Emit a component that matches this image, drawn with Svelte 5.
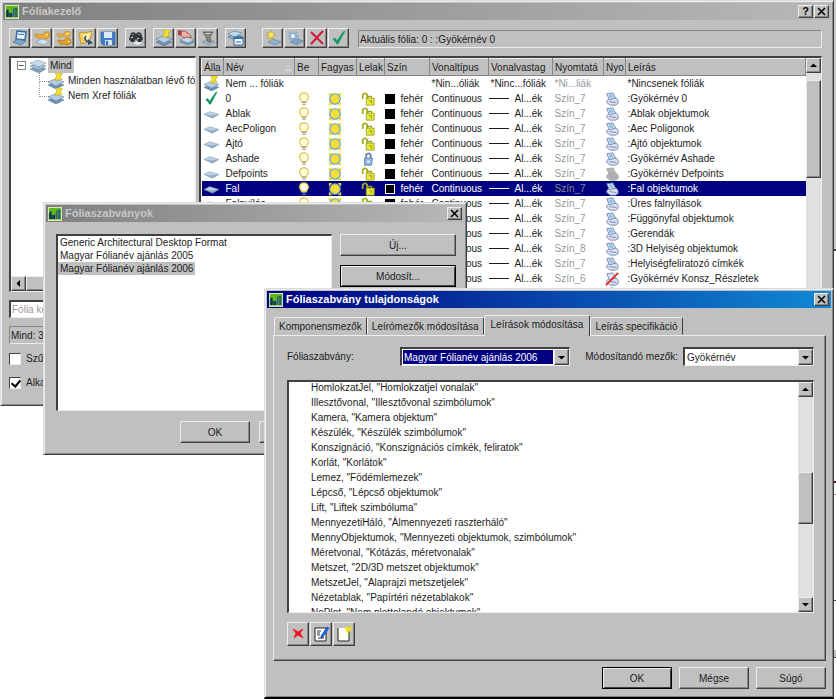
<script>
    let filterText = "";
    let invert = false;
    let apply = true;
    let activeTab = 2;
    let standard = "Magyar Fólianév ajánlás 2006";
    let field = "Gyökérnév";
    let selectedLayer = "Fal";

    const toolGroups = [
        ["filter", "key", "keys", "folder", "save"],
        ["find"],
        ["used", "hand", "funnel"],
        ["override"],
        ["create", "frozen", "delete", "current"],
    ];

    const toolNames = {
        filter: "Új szűrő",
        key: "Kulcs",
        keys: "Kulcsok",
        folder: "Betöltés",
        save: "Mentés",
        find: "Keresés",
        used: "Használt fóliák",
        hand: "Kijelölés",
        funnel: "Szűrés",
        override: "Felülbírálás",
        create: "Új fólia",
        frozen: "Új fagyasztott fólia",
        delete: "Törlés",
        current: "Aktuális",
    };

    const columns = [
        { title: "Álla", width: 22 },
        { title: "Név", width: 71, sorted: true },
        { title: "Be", width: 24 },
        { title: "Fagyas", width: 38 },
        { title: "Lelak", width: 28 },
        { title: "Szín", width: 45 },
        { title: "Vonaltípus", width: 59 },
        { title: "Vonalvastag", width: 64 },
        { title: "Nyomtatá", width: 51 },
        { title: "Nyo", width: 22 },
        { title: "Leírás" },
    ];

    const layers = [
        { name: "0", style: "Szín_7", desc: ":Gyökérnév 0", current: true },
        { name: "Ablak", style: "Szín_7", desc: ":Ablak objektumok" },
        { name: "AecPoligon", style: "Szín_7", desc: ":Aec Poligonok" },
        { name: "Ajtó", style: "Szín_7", desc: ":Ajtó objektumok" },
        { name: "Ashade", style: "Szín_7", desc: ":Gyökérnév Ashade", locked: true },
        { name: "Defpoints", style: "Szín_7", desc: ":Gyökérnév Defpoints", plot: "plotgray" },
        { name: "Fal", style: "Szín_7", desc: ":Fal objektumok" },
        { name: "Falnyílás", style: "Szín_7", desc: ":Üres falnyílások" },
        { name: "Függönyfal", style: "Szín_7", desc: ":Függönyfal objektumok" },
        { name: "Gerenda", style: "Szín_7", desc: ":Gerendák" },
        { name: "Helyiség", style: "Szín_8", desc: ":3D Helyiség objektumok" },
        { name: "HelyFelirat", style: "Szín_7", desc: ":Helyiségfeliratozó címkék" },
        { name: "Konsz_Rész", style: "Szín_6", desc: ":Gyökérnév Konsz_Részletek", plot: "noplot" },
        { name: "Konszign", style: "Szín_7", desc: ":Konszignációs címkék, feliratok" },
    ];

    const standards = [
        "Generic Architectural Desktop Format",
        "Magyar Fólianév ajánlás 2005",
        "Magyar Fólianév ajánlás 2006",
    ];

    const tabs = [
        "Komponensmezők",
        "Leírómezők módosítása",
        "Leírások módosítása",
        "Leírás specifikáció",
    ];

    const descriptions = [
        ["HomlokzatJel", "Homlokzatjel vonalak"],
        ["Illesztővonal", "Illesztővonal szimbólumok"],
        ["Kamera", "Kamera objektum"],
        ["Készülék", "Készülék szimbólumok"],
        ["Konszignáció", "Konszignációs címkék, feliratok"],
        ["Korlát", "Korlátok"],
        ["Lemez", "Födémlemezek"],
        ["Lépcső", "Lépcső objektumok"],
        ["Lift", "Liftek szimbóluma"],
        ["MennyezetiHáló", "Álmennyezeti raszterháló"],
        ["MennyObjektumok", "Mennyezeti objektumok, szimbólumok"],
        ["Méretvonal", "Kótázás, méretvonalak"],
        ["Metszet", "2D/3D metszet objektumok"],
        ["MetszetJel", "Alaprajzi metszetjelek"],
        ["Nézetablak", "Papírtéri nézetablakok"],
        ["NoPlot", "Nem plottolandó objektumok"],
    ];
</script>

{#snippet icon(name)}
    <svg class="icon" viewBox="0 0 16 16" aria-hidden="true">
        {#if name === "app"}
            <rect width="16" height="16" fill="#e4f0c8" />
            <rect x="1" y="1" width="14" height="14" fill="#5fb91c" />
            <path d="M1 7h3v2h3v5H1z" fill="#1f5c3a" />
            <path d="M2 5h2v9H2zM6 9h2v5H6z" fill="#17324f" />
            <path d="M9 4h1v10H9zM11 3h3v11h-3z" fill="#244c5a" />
            <path d="M8 8h1v5H8zM12 4h1v9h-1z" fill="#3a7fc4" />
            <path d="M1 14h14v1H1z" fill="#c7d58a" />
        {:else if name === "sheets"}
            <path d="M0 11l8-3 8 3-7 4z" fill="#7f9fbd" stroke="#5f80a2" stroke-width=".5" />
            <path d="M0 8l8-3 8 3-7 4z" fill="#a5c0d8" stroke="#5f80a2" stroke-width=".5" />
            <path d="M0 5l8-3 8 3-7 4z" fill="#c9dcec" stroke="#6f90b0" stroke-width=".5" />
        {:else if name === "sheet"}
            <path d="M0 9l6-3 10 3-7 4z" fill="#8fabc8" stroke="#7894b0" stroke-width=".5" />
            <path d="M1 9l5-3 9 3-7 1z" fill="#bcd0e3" />
        {:else if name === "filter"}
            <path d="M5 1l9 1-1 8-9-1z" fill="#e9f2fa" stroke="#2d6cab" stroke-width="1.5" />
            <path d="M6 4l6 .6" stroke="#2d6cab" />
            <path d="M1 12l5-3 8 2-5 4z" fill="#7fa4c6" stroke="#3c6690" stroke-width=".6" />
        {:else if name === "key"}
            <path d="M2 12l6-3 7 2-5 4z" fill="#d3e0ec" stroke="#6b8aa8" stroke-width=".5" />
            <path d="M1 4l8 1 2-3h4v5l-3 2-3-1H6l-1 1-1-2-3-1z" fill="#eeb23c" stroke="#c98510" stroke-width=".8" />
            <path d="M12 4h2v1h-2z" fill="#fff3c0" />
        {:else if name === "keys"}
            <path d="M1 4h7l2-3 4 1v4l-3 1-3-1H5L4 8 3 6 1 5z" fill="#f0ba48" stroke="#c98510" stroke-width=".7" />
            <path d="M2 10l6 1 2-3 4 1 1 4-3 2-4-1H6l-1 1-1-2-2-1z" fill="#e8a126" stroke="#b87408" stroke-width=".7" />
            <path d="M11 3h2v1h-2zM12 11h2v1h-2z" fill="#fff3c0" />
        {:else if name === "folder"}
            <path d="M1 3l4-1 1 1 8-2-2 10-9 3z" fill="#f0cf5c" stroke="#b8901c" stroke-width=".8" />
            <path d="M4 5l9-2-4 9z" fill="#fff0ae" />
            <path d="M8 6c-2 2-1 5 3 6" fill="none" stroke="#2c4f7c" stroke-width="1.6" />
            <path d="M10 9l5 4-5 2z" fill="#2c4f7c" />
        {:else if name === "save"}
            <path d="M1 2h14v13H3l-2-2z" fill="#3f7fc8" stroke="#24589c" stroke-width=".6" />
            <path d="M4 2h8v6H4z" fill="#dce9f6" />
            <path d="M5 10h7v5H5z" fill="#d4e0ee" />
            <path d="M6 11h2v4H6z" fill="#2f6fbd" />
        {:else if name === "find"}
            <path d="M4 13l6-3 6 2-6 4z" fill="#e2e8ee" stroke="#8795a5" stroke-width=".5" />
            <path d="M3 3l3-1 2 2 2-2 3 1 2 6-2 3h-3l-2-3-2 3H3L1 9z" fill="#32363c" />
            <path d="M3 8l2-1M9 9l2-1M5 4v1M11 4v1" stroke="#c9d3df" stroke-width="1.2" />
        {:else if name === "used"}
            <path d="M0 12l7-3 9 3-8 4z" fill="#6f93b5" stroke="#4d6f92" stroke-width=".5" />
            <path d="M0 9l7-3 9 3-8 4z" fill="#b4cde2" stroke="#4d6f92" stroke-width=".5" />
            <path d="M7 0h7v2l-2 1 2 4-3-1-3 2-1-2 2-3z" fill="#f5e228" stroke="#b8a414" stroke-width=".6" />
        {:else if name === "hand"}
            <path d="M2 12l7-4 7 4-6 3z" fill="#7d9dbd" stroke="#4d6f92" stroke-width=".5" />
            <path d="M2 10l7-4 7 4-6 3z" fill="#c4d8e8" stroke="#4d6f92" stroke-width=".5" />
            <path d="M3 1h4l6 5v2l-4-1-3 1-2-2-2-1z" fill="#eeb0a2" stroke="#9b3a35" stroke-width=".8" />
            <path d="M0 0l4 1-1 5-3-1z" fill="#b3383f" />
        {:else if name === "funnel"}
            <path d="M2 12l7-3 6 3-6 3z" fill="#9db9d2" stroke="#58789a" stroke-width=".5" />
            <path d="M3 2h10l-3 5 1 5H8L6 7z" fill="#8a867d" stroke="#55524c" stroke-width=".7" />
            <path d="M5 3h6l-1 1H6z" fill="#d7d2c5" />
        {:else if name === "override"}
            <path d="M0 7l6-3 7 2-6 4z" fill="#8aaac8" stroke="#4b6e91" stroke-width=".5" />
            <path d="M0 4l6-3 8 2-7 4z" fill="#c4d8ea" stroke="#4b6e91" stroke-width=".5" />
            <path d="M6 7h9v8H6z" fill="#f3f7fb" stroke="#2f5f99" />
            <path d="M6 7h9v2H6z" fill="#2f6fbd" />
            <path d="M8 11h5v2H8z" fill="#92b1d1" />
        {:else if name === "create"}
            <path d="M3 12l5-3 8 3-6 3z" fill="#8fb0d0" stroke="#5d7ea2" stroke-width=".6" />
            <path d="M6 0v11M1 5h10M2 2l7 7M9 2L2 9" stroke="#c8a51b" />
            <circle cx="6" cy="5" r="2.4" fill="#ffe94a" />
        {:else if name === "frozen"}
            <path d="M3 12l6-4 7 3-6 4z" fill="#7fa2c6" stroke="#5d7ea2" stroke-width=".6" />
            <path d="M6 1v11M1 6h11M2 2l8 8M10 2L2 10" stroke="#7ea8cf" stroke-width="1.4" />
            <circle cx="6" cy="6" r="2" fill="#e9f5ff" />
        {:else if name === "delete"}
            <path d="M2 2l12 12M14 1L2 14" stroke="#d01c3c" stroke-width="2" fill="none" />
        {:else if name === "current"}
            <path d="M2 9l2-1 2 3 6-9 2-1-7 13H6z" fill="#0b9a62" stroke="#0b9a62" stroke-width=".6" />
        {:else if name === "bulb"}
            <path d="M8 1c-3 0-5 2-5 5 0 2 2 3 2 5h6c0-2 2-3 2-5 0-3-2-5-5-5z" fill="#fffde0" stroke="#e0c548" stroke-width="1.3" />
            <path d="M6 12h4M6 14h4" stroke="#8d97a5" stroke-width="1.4" />
        {:else if name === "sun"}
            <path d="M1 1h4L1 5zM15 1h-4l4 4zM1 15v-4l4 4zM15 15h-4l4-4z" fill="#f0dc28" />
            <circle cx="8" cy="8" r="6" fill="#f6dd3a" stroke="#5fa4bc" stroke-width="1.4" />
        {:else if name === "unlock"}
            <path d="M2 8V3q3-3 5 0v5" fill="none" stroke="#a4ac20" stroke-width="2" />
            <path d="M6 7h9v8H6z" fill="#ebe83c" stroke="#9ca21c" />
            <path d="M8 7V5h4v2M9 10h3v3" fill="none" stroke="#9ca21c" stroke-width="1.3" />
        {:else if name === "lock"}
            <path d="M6 7V3q3-3 5 0v4" fill="none" stroke="#5a7dab" stroke-width="2" />
            <path d="M4 7h9l-1 8H4z" fill="#9cb9dc" stroke="#5a7dab" />
            <path d="M7 10h3v2H7z" fill="#e7f0fa" />
        {:else if name === "plot" || name === "plotgray" || name === "noplot"}
            <g fill={name === "plotgray" ? "#b5b5b5" : "#dbe2f3"} stroke={name === "plotgray" ? "#a4a4a4" : "#747fa9"}>
                <path d="M2 10l3-3h8l2 3v3l-3 2H6l-4-3z" />
                <path d="M2 2l7-1 3 6-7 2z" />
                <path d="M5 11l8 1" />
            </g>
            {#if name === "plot"}
                <path d="M4 3l4-.5L10 6 6 7z" fill="#85c5e8" />
            {:else if name === "noplot"}
                <path d="M1 15L15 1" stroke="#e02a1e" stroke-width="2" />
            {/if}
        {:else if name === "erase"}
            <path d="M3 3l2 1 3 2 5-3-3 4 3 5-5-3-4 3 2-5z" fill="#f0141e" stroke="#f0141e" stroke-width=".8" />
        {:else if name === "edit"}
            <path d="M2 2h11v13H2z" fill="#fff" stroke="#222" />
            <path d="M4 5h4M4 7h3M4 9h3M5 12h6" stroke="#333" />
            <path d="M14 1l2 1-6 9-2 1v-2z" fill="#1f6fe0" stroke="#0c2f9a" stroke-width=".6" />
        {:else if name === "new"}
            <path d="M2 2h11v13H2z" fill="#fffff4" />
            <path d="M2 2v13h11V5" fill="none" stroke="#222" />
            <path d="M12 0v7M9 3h7M10 1l5 5M15 1l-5 5" stroke="#f2e01c" stroke-width="1.3" />
        {/if}
    </svg>
{/snippet}

{#snippet closeIcon()}
    <svg class="glyph" viewBox="0 0 9 9" aria-hidden="true">
        <path d="M1 1l7 7M8 1L1 8" stroke="#000" stroke-width="1.6" />
    </svg>
{/snippet}

{#snippet arrow(dir)}
    <svg class="glyph" viewBox="0 0 9 9" aria-hidden="true">
        {#if dir === "up"}
            <path d="M1 6h7L4.500 2.500z" />
        {:else if dir === "down"}
            <path d="M1 3h7L4.500 6.500z" />
        {:else}
            <path d="M6 1v7L2.500 4.500z" />
        {/if}
    </svg>
{/snippet}

<main class="desktop">
    <div class="drawing"></div>

    <section class="window manager">
        <header class="titlebar">
            {@render icon("app")}
            <h1>Fóliakezelő</h1>
            <button class="caption" aria-label="Súgó">?</button>
            <button class="caption" aria-label="Bezárás">{@render closeIcon()}</button>
        </header>

        <div class="toolbar">
            {#each toolGroups as group}
                <div class="group">
                    {#each group as tool}
                        <button class="tool" aria-label={toolNames[tool]}>{@render icon(tool)}</button>
                    {/each}
                </div>
            {/each}
            <output class="status">Aktuális fólia: 0 : :Gyökérnév 0</output>
        </div>

        <div class="panes">
            <aside>
                <div class="tree">
                    <ul>
                        <li>
                            <button class="expander" aria-label="Összecsukás">−</button>
                            {@render icon("sheets")}
                            <span class="chosen">Mind</span>
                        </li>
                        <li class="child">{@render icon("used")}<span>Minden használatban lévő fóliák</span></li>
                        <li class="child">{@render icon("used")}<span>Nem Xref fóliák</span></li>
                    </ul>
                    <div class="hscroll">
                        <button class="scroll" aria-label="Balra">{@render arrow("left")}</button>
                        <div class="thumb"></div>
                    </div>
                </div>
                <input class="search" type="text" placeholder="Fólia keresése" aria-label="Fólia keresése" bind:value={filterText} />
                <output class="status count">Mind: 35 fólia</output>
                <label><input type="checkbox" bind:checked={invert} />Szűrő invertálása</label>
                <label><input type="checkbox" bind:checked={apply} />Alkalmazás az eszköztárra</label>
            </aside>

            <div class="layers">
                <div class="rows">
                    <table>
                        <colgroup>
                            {#each columns as column}
                                <col style={column.width ? `width:${column.width}px` : ""} />
                            {/each}
                        </colgroup>
                        <thead>
                            <tr>
                                {#each columns as column}
                                    <th class:sorted={column.sorted}>{column.title}</th>
                                {/each}
                            </tr>
                        </thead>
                        <tbody>
                            <tr>
                                <td>{@render icon("used")}</td>
                                <td>Nem ... fóliák</td>
                                <td></td>
                                <td></td>
                                <td></td>
                                <td></td>
                                <td>*Nin...óliák</td>
                                <td>*Ninc...fóliák</td>
                                <td class="muted">*Ni...liák</td>
                                <td></td>
                                <td>*Nincsenek fóliák</td>
                            </tr>
                            {#each layers as layer}
                                <tr class:selected={layer.name === selectedLayer} on:click={() => (selectedLayer = layer.name)}>
                                    <td>{@render icon(layer.current ? "current" : "sheet")}</td>
                                    <td>{layer.name}</td>
                                    <td class="center">{@render icon("bulb")}</td>
                                    <td class="center">{@render icon("sun")}</td>
                                    <td class="center">{@render icon(layer.locked ? "lock" : "unlock")}</td>
                                    <td class="tight"><span class="cell"><i class="swatch"></i>fehér</span></td>
                                    <td>Continuous</td>
                                    <td class="tight"><span class="cell"><i class="line"></i>Al...ék</span></td>
                                    <td class="muted">{layer.style}</td>
                                    <td class="center">{@render icon(layer.plot || "plot")}</td>
                                    <td>{layer.desc}</td>
                                </tr>
                            {/each}
                        </tbody>
                    </table>
                </div>
                <div class="vscroll">
                    <button class="scroll" aria-label="Fel">{@render arrow("up")}</button>
                    <div class="thumb"></div>
                </div>
            </div>
        </div>
    </section>

    <section class="window standards">
        <header class="titlebar">
            {@render icon("app")}
            <h1>Fóliaszabványok</h1>
            <button class="caption" aria-label="Bezárás">{@render closeIcon()}</button>
        </header>
        <div class="choose">
            <ul class="listbox" role="listbox" aria-label="Fóliaszabványok">
                {#each standards as item}
                    <li role="option" aria-selected={item === standard}>
                        <span class:chosen={item === standard}>{item}</span>
                    </li>
                {/each}
            </ul>
            <div class="side">
                <button class="push">Új...</button>
                <button class="push default">Módosít...</button>
            </div>
        </div>
        <footer>
            <button class="push">OK</button>
            <button class="push">Mégse</button>
            <button class="push">Súgó</button>
        </footer>
    </section>

    <section class="window properties">
        <header class="titlebar active">
            {@render icon("app")}
            <h1>Fóliaszabvány tulajdonságok</h1>
            <button class="caption" aria-label="Bezárás">{@render closeIcon()}</button>
        </header>
        <div class="tabs" role="tablist">
            {#each tabs as tab, i}
                <button role="tab" aria-selected={i === activeTab} class:active={i === activeTab} on:click={() => (activeTab = i)}>{tab}</button>
            {/each}
        </div>
        <div class="page">
            <div class="fields">
                <label for="standard">Fóliaszabvány:</label>
                <div class="combo focused">
                    <select id="standard" bind:value={standard}>
                        {#each standards as item}
                            <option>{item}</option>
                        {/each}
                    </select>
                    <span class="drop">{@render arrow("down")}</span>
                </div>
                <label class="second" for="field">Módosítandó mezők:</label>
                <div class="combo small">
                    <select id="field" bind:value={field}>
                        <option>Gyökérnév</option>
                    </select>
                    <span class="drop">{@render arrow("down")}</span>
                </div>
            </div>
            <div class="descriptions">
                <ul>
                    {#each descriptions as [key, text]}
                        <li>{key}, "{text}"</li>
                    {/each}
                </ul>
                <div class="vscroll">
                    <button class="scroll" aria-label="Fel">{@render arrow("up")}</button>
                    <div class="thumb"></div>
                    <button class="scroll" aria-label="Le">{@render arrow("down")}</button>
                </div>
            </div>
            <div class="actions">
                <button class="tool" aria-label="Törlés">{@render icon("erase")}</button>
                <button class="tool" aria-label="Szerkesztés">{@render icon("edit")}</button>
                <button class="tool" aria-label="Új">{@render icon("new")}</button>
            </div>
        </div>
        <footer>
            <button class="push default">OK</button>
            <button class="push">Mégse</button>
            <button class="push">Súgó</button>
        </footer>
    </section>
</main>

<style>
    :global(body) {
        background: #fff;
    }
    .desktop {
        --face: #c0c0c0;
        --light: #ececec;
        --dark: #404040;
        --shade: #868686;
        --navy: #000080;
        position: relative;
        min-height: 100vh;
        overflow: hidden;
        font: 10px/15px "Liberation Sans", Arial, sans-serif;
        color: #1c1c1c;
    }
    .desktop * {
        box-sizing: border-box;
    }
    ul {
        list-style: none;
        margin: 0;
        padding: 0;
    }
    button,
    input,
    select {
        font: inherit;
        color: inherit;
        margin: 0;
        padding: 0;
        border-radius: 0;
    }
    .drawing {
        position: absolute;
        inset: 0 0 0 auto;
        width: 3px;
        background: linear-gradient(
            #ccc 0 249px,
            #444 249px 251px,
            #fff 251px 481px,
            #800010 481px 483px,
            #fff 483px 494px,
            #c88 494px 495px,
            #fff 495px 600px,
            #444 600px 601px,
            #fff 601px 650px,
            #c0c0c0 650px 657px,
            #444 657px 658px,
            #fff 658px
        );
    }

    .window {
        position: absolute;
        display: flex;
        flex-direction: column;
        background: var(--face);
        border: 1px solid;
        border-color: #dcdcdc var(--dark) var(--dark) #dcdcdc;
        box-shadow: inset 1px 1px var(--light), inset -1px -1px var(--shade);
        padding: 2px;
    }
    .manager {
        top: 0;
        left: 0;
        right: 2px;
        height: 406px;
    }
    .standards {
        top: 202px;
        left: 43px;
        width: 424px;
    }
    .properties {
        top: 288px;
        left: 264px;
        right: 2px;
        border-bottom: 2px solid #000;
    }

    .titlebar {
        display: flex;
        align-items: center;
        height: 17px;
        padding: 0 2px;
        background: linear-gradient(90deg, #808080, #b8b8b8);
    }
    .titlebar.active {
        background: linear-gradient(90deg, #000080, #1088d4);
    }
    .titlebar .icon {
        width: 14px;
        height: 14px;
    }
    h1 {
        flex: 1;
        margin: 0 0 0 3px;
        font-size: 11px;
        color: #c8c8c8;
    }
    .active h1 {
        color: #fff;
    }

    .caption,
    .tool,
    .push,
    .scroll,
    .thumb,
    .drop {
        display: flex;
        align-items: center;
        justify-content: center;
        background: var(--face);
        border: 1px solid;
        border-color: var(--light) var(--dark) var(--dark) var(--light);
        box-shadow: inset -1px -1px var(--shade);
    }
    .caption {
        width: 15px;
        height: 13px;
        margin-left: 1px;
        font-size: 11px;
        font-weight: bold;
        line-height: 11px;
        color: #000;
    }
    .glyph {
        display: block;
        flex: none;
        width: 9px;
        height: 9px;
    }
    .icon {
        display: block;
        flex: none;
        width: 16px;
        height: 16px;
    }

    .toolbar {
        display: flex;
        gap: 7px;
        padding: 8px 9px 8px 6px;
    }
    .group {
        display: flex;
        gap: 1px;
    }
    .group:nth-child(5) {
        margin-left: 9px;
    }
    .tool {
        width: 21px;
        height: 20px;
    }
    .status {
        flex: 1;
        height: 18px;
        border: 1px solid;
        border-color: var(--shade) var(--light) var(--light) var(--shade);
        padding: 0 1px;
        line-height: 17px;
    }
    .toolbar .status {
        margin: 2px 0 0 2px;
    }

    .panes {
        flex: 1;
        min-height: 0;
        display: grid;
        grid-template-columns: 187px 1fr;
        gap: 3px;
        padding: 0 9px 8px 6px;
    }
    aside {
        display: flex;
        flex-direction: column;
    }
    .tree,
    .layers,
    .listbox,
    .descriptions,
    .combo,
    .search {
        background: #fff;
        border: 2px solid;
        border-width: 2px 1px 1px 2px;
        border-color: var(--dark) var(--light) var(--light) var(--dark);
    }
    .tree {
        display: flex;
        flex-direction: column;
        justify-content: space-between;
        height: 236px;
        overflow: hidden;
    }
    .tree li {
        display: flex;
        align-items: center;
        gap: 4px;
        height: 15px;
        padding-left: 6px;
        white-space: nowrap;
    }
    .tree .child {
        position: relative;
        padding-left: 37px;
    }
    .child::before {
        content: "";
        position: absolute;
        left: 28px;
        top: -7px;
        width: 9px;
        height: 15px;
        border: dotted #999;
        border-width: 0 0 1px 1px;
    }
    .expander {
        width: 9px;
        height: 9px;
        border: 1px solid var(--shade);
        background: #fff;
        line-height: 7px;
    }
    .chosen {
        background: var(--face);
        padding: 0 2px;
        margin: 0 -2px;
    }
    .hscroll {
        display: flex;
        height: 15px;
        background: #e0e0e0;
    }
    .hscroll .thumb {
        width: 120px;
    }
    .scroll {
        flex: none;
        width: 15px;
        height: 15px;
    }
    .search {
        height: 18px;
        margin: 8px 0;
        padding: 0 1px;
    }
    .search::placeholder {
        color: #999;
    }
    .count {
        flex: none;
        margin-bottom: 7px;
    }
    aside label {
        display: flex;
        align-items: center;
        gap: 5px;
        height: 15px;
        margin-bottom: 9px;
    }
    [type="checkbox"] {
        appearance: none;
        position: relative;
        width: 12px;
        height: 12px;
        background: #fff;
        border: 1px solid;
        border-color: var(--dark) var(--light) var(--light) var(--dark);
    }
    [type="checkbox"]:checked::after {
        content: "";
        position: absolute;
        left: 3px;
        top: 0;
        width: 4px;
        height: 7px;
        border: solid #000;
        border-width: 0 2px 2px 0;
        transform: rotate(40deg);
    }

    .layers {
        display: flex;
        min-height: 0;
        overflow: hidden;
    }
    .rows {
        flex: 1;
        overflow: hidden;
    }
    table {
        width: 100%;
        table-layout: fixed;
        border-collapse: collapse;
    }
    th,
    td {
        height: 15px;
        padding: 0 2px;
        text-align: left;
        white-space: nowrap;
        overflow: hidden;
    }
    th {
        position: relative;
        height: 17px;
        font-weight: normal;
        background: var(--face);
        border: 1px solid;
        border-color: var(--light) var(--shade) var(--shade) var(--light);
    }
    .sorted::after {
        content: "△";
        position: absolute;
        right: 3px;
        font-size: 8px;
        color: #eee;
    }
    td .icon {
        width: 15px;
        height: 15px;
    }
    td.center {
        padding: 0 6px 0 0;
    }
    .center .icon {
        width: 14px;
        height: 14px;
        margin: 0 auto;
    }
    td.tight {
        padding: 0;
    }
    .cell {
        display: flex;
        align-items: center;
        gap: 6px;
    }
    .swatch {
        width: 10px;
        height: 10px;
        background: #000;
    }
    .line {
        width: 20px;
        height: 1px;
        background: currentColor;
    }
    .muted {
        color: #999;
    }
    .selected {
        background: var(--navy);
        color: #fff;
    }
    .selected .muted {
        color: #888;
    }
    .selected .swatch {
        border: 1px solid #fff;
    }
    .vscroll {
        display: flex;
        flex-direction: column;
        width: 15px;
        background: #e0e0e0;
    }
    .layers .thumb {
        height: 98px;
        margin-top: 7px;
    }

    .choose {
        display: flex;
        align-items: flex-start;
        gap: 8px;
        padding: 12px 8px 10px 10px;
    }
    .listbox {
        flex: 1;
        height: 177px;
        padding: 0 2px;
        line-height: 13px;
    }
    .listbox span {
        display: inline-block;
    }
    .side {
        display: flex;
        flex-direction: column;
        gap: 9px;
        width: 116px;
    }
    .push {
        height: 22px;
    }
    .push.default {
        border-color: #000;
        box-shadow: inset 1px 1px var(--light), inset -1px -1px var(--dark);
    }
    footer {
        display: flex;
        justify-content: flex-end;
        gap: 7px;
        padding: 6px 5px;
    }
    footer .push {
        width: 70px;
    }
    .standards footer {
        justify-content: flex-start;
        gap: 9px;
        padding: 0 0 9px 134px;
    }

    .tabs {
        display: flex;
        align-items: flex-end;
        padding: 7px 6px 0 7px;
    }
    .tabs button {
        height: 18px;
        padding: 0 4px;
        background: var(--face);
        border: 1px solid;
        border-color: var(--light) var(--dark) transparent var(--light);
        border-radius: 2px 2px 0 0;
    }
    .tabs .active {
        height: 21px;
        padding: 0 6px 3px;
        margin-bottom: -1px;
        border-bottom: 0;
        z-index: 1;
    }
    .page {
        margin: 0 5px 0 6px;
        padding: 11px 11px 14px 13px;
        border: 1px solid;
        border-color: var(--light) var(--dark) var(--dark) var(--light);
        box-shadow: inset -1px -1px var(--shade);
    }
    .fields {
        display: flex;
        align-items: center;
        margin-bottom: 14px;
    }
    .fields label {
        flex: none;
        width: 113px;
    }
    .fields .second {
        width: auto;
        margin: 0 5px 0 15px;
    }
    .combo {
        flex: 170;
        display: flex;
        min-width: 0;
        height: 19px;
    }
    .combo.small {
        flex: 130;
    }
    .combo select {
        flex: 1;
        min-width: 0;
        appearance: none;
        border: 1px solid #fff;
        background: #fff;
        padding: 0 1px;
        outline: none;
    }
    .combo.focused select {
        background: var(--navy);
        color: #fff;
    }
    .drop {
        flex: none;
        width: 15px;
        pointer-events: none;
    }
    .descriptions {
        display: flex;
        height: 233px;
        overflow: hidden;
    }
    .descriptions ul {
        flex: 1;
        margin-top: -2px;
        padding-left: 22px;
    }
    .descriptions .thumb {
        height: 52px;
        margin: 75px 0 auto;
    }
    .actions {
        display: flex;
        gap: 1px;
        margin-top: 9px;
    }
    .actions .tool {
        width: 22px;
        height: 24px;
    }
</style>
